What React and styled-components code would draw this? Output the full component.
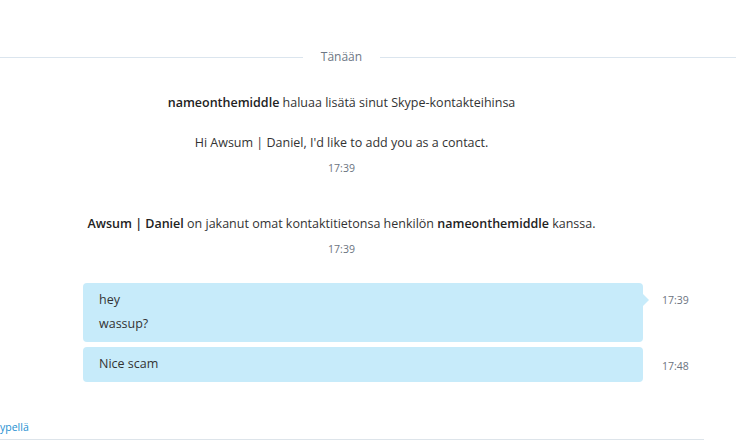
import React from "react";
import styled, { createGlobalStyle } from "styled-components";

const GlobalStyle = createGlobalStyle`
  html, body { margin: 0; padding: 0; background: #ffffff; }
  body { font-family: "Open Sans", "Noto Sans", sans-serif; color: #333333; }
`;

const Page = styled.div`
  width: 736px;
  height: 447px;
  overflow: hidden;
  display: flex;
  flex-direction: column;
`;

const Divider = styled.div`
  display: flex;
  align-items: center;
  gap: 18px;
  margin-top: 49px;
  height: 16px;
`;

const Line = styled.div`
  flex: ${(p) => p.$grow} 1 0;
  height: 1px;
  background: #dbe5ee;
`;

const DayLabel = styled.span`
  font-size: 12px;
  color: #6d7785;
  line-height: 16px;
`;

const Column = styled.div`
  width: 683px;
  display: flex;
  flex-direction: column;
  align-items: center;
`;

const Notice = styled.div`
  font-size: 12.5px;
  line-height: 20px;
  margin-top: ${(p) => p.$top}px;
  white-space: nowrap;
  b { font-weight: 600; color: #222; }
`;

const Stamp = styled.div`
  font-size: 10.5px;
  line-height: 16px;
  color: #6b7380;
  margin-top: 7px;
`;

const Thread = styled.div`
  display: flex;
  flex-direction: column;
  gap: 5px;
  margin-top: 26px;
  padding-left: 83px;
`;

const MessageRow = styled.div`
  display: flex;
  align-items: flex-start;
`;

const Bubble = styled.div`
  position: relative;
  width: 560px;
  box-sizing: border-box;
  background: #c7ebfa;
  border-radius: 4px;
  padding: 5px 16px 6px;
  font-size: 12.5px;
  line-height: 24px;
  ${(p) =>
    p.$tail &&
    `
    &::after {
      content: "";
      position: absolute;
      right: -6px;
      top: 11px;
      border-top: 6px solid transparent;
      border-bottom: 6px solid transparent;
      border-left: 6px solid #c7ebfa;
    }
  `}
`;

const MsgTime = styled.div`
  margin-left: 19px;
  margin-top: ${(p) => p.$top}px;
  font-size: 10.5px;
  line-height: 16px;
  color: #6b7380;
`;

const Footer = styled.div`
  margin-top: auto;
  margin-bottom: 7px;
  width: 704px;
  border-bottom: 1px solid #dde4ea;
  padding-bottom: 3px;
`;

const FooterLink = styled.span`
  font-size: 10.5px;
  line-height: 16px;
  color: #1d8fd2;
`;

export default function App() {
  return (
    <>
      <GlobalStyle />
      <Page>
        <Divider>
          <Line $grow={302} />
          <DayLabel>Tänään</DayLabel>
          <Line $grow={355} />
        </Divider>
        <Column>
          <Notice $top={28}>
            <b>nameonthemiddle</b> haluaa lisätä sinut Skype-kontakteihinsa
          </Notice>
          <Notice $top={20}>Hi Awsum | Daniel, I'd like to add you as a contact.</Notice>
          <Stamp>17:39</Stamp>
          <Notice $top={38}>
            <b>Awsum | Daniel</b> on jakanut omat kontaktitietonsa henkilön{" "}
            <b>nameonthemiddle</b> kanssa.
          </Notice>
          <Stamp>17:39</Stamp>
        </Column>
        <Thread>
          <MessageRow>
            <Bubble $tail>
              <div>hey</div>
              <div>wassup?</div>
            </Bubble>
            <MsgTime $top={9}>17:39</MsgTime>
          </MessageRow>
          <MessageRow>
            <Bubble>
              <div>Nice scam</div>
            </Bubble>
            <MsgTime $top={11}>17:48</MsgTime>
          </MessageRow>
        </Thread>
        <Footer>
          <FooterLink>ypellä</FooterLink>
        </Footer>
      </Page>
    </>
  );
}
